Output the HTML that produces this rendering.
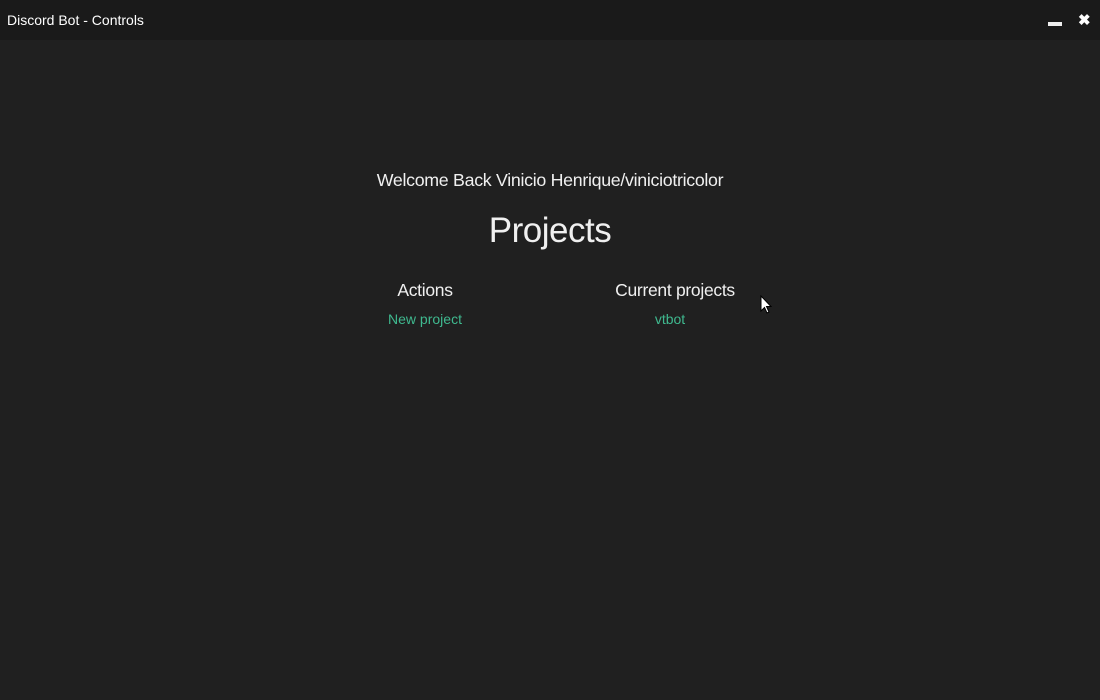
<!DOCTYPE html>
<html><head><style>
body{margin:0;width:1100px;height:700px;background:#202020;font-family:"Liberation Sans",sans-serif;overflow:hidden;position:relative;color:#f0f0f0}
.bar{position:absolute;left:0;top:0;width:1100px;height:40px;background:#1a1a1a}
.title{position:absolute;left:7px;top:12px;font-size:14px;color:#fff}
.min{position:absolute;left:1048px;top:22px;width:14px;height:4px;background:#eee}
.x{position:absolute;left:1078px;top:11px;font-size:15px;font-weight:bold;color:#fff}
.c{position:absolute;text-align:center;white-space:nowrap;transform:translateX(-50%)}
.link{color:#3fb98f;font-size:14px}
</style></head><body>
<div class="bar"><div class="title">Discord Bot - Controls</div><div class="min"></div><div class="x">✖</div></div>
<div class="c" style="left:550px;top:170px;font-size:17.8px;letter-spacing:-0.3px">Welcome Back Vinicio Henrique/viniciotricolor</div>
<div class="c" style="left:550px;top:211px;font-size:35px;letter-spacing:-0.5px">Projects</div>
<div class="c" style="left:425px;top:280px;font-size:17.5px;letter-spacing:-0.3px">Actions</div>
<div class="c" style="left:675px;top:280px;font-size:17.5px;letter-spacing:-0.3px">Current projects</div>
<div class="c link" style="left:425px;top:311px">New project</div>
<div class="c link" style="left:670px;top:311px">vtbot</div>
<svg style="position:absolute;left:760px;top:295px" width="14" height="20" viewBox="0 0 14 20"><path d="M1 1 L1 16 L4.5 12.5 L7 18 L9 17 L6.5 11.5 L11 11.5 Z" fill="#fff" stroke="#000" stroke-width="1"/></svg>
</body></html>
